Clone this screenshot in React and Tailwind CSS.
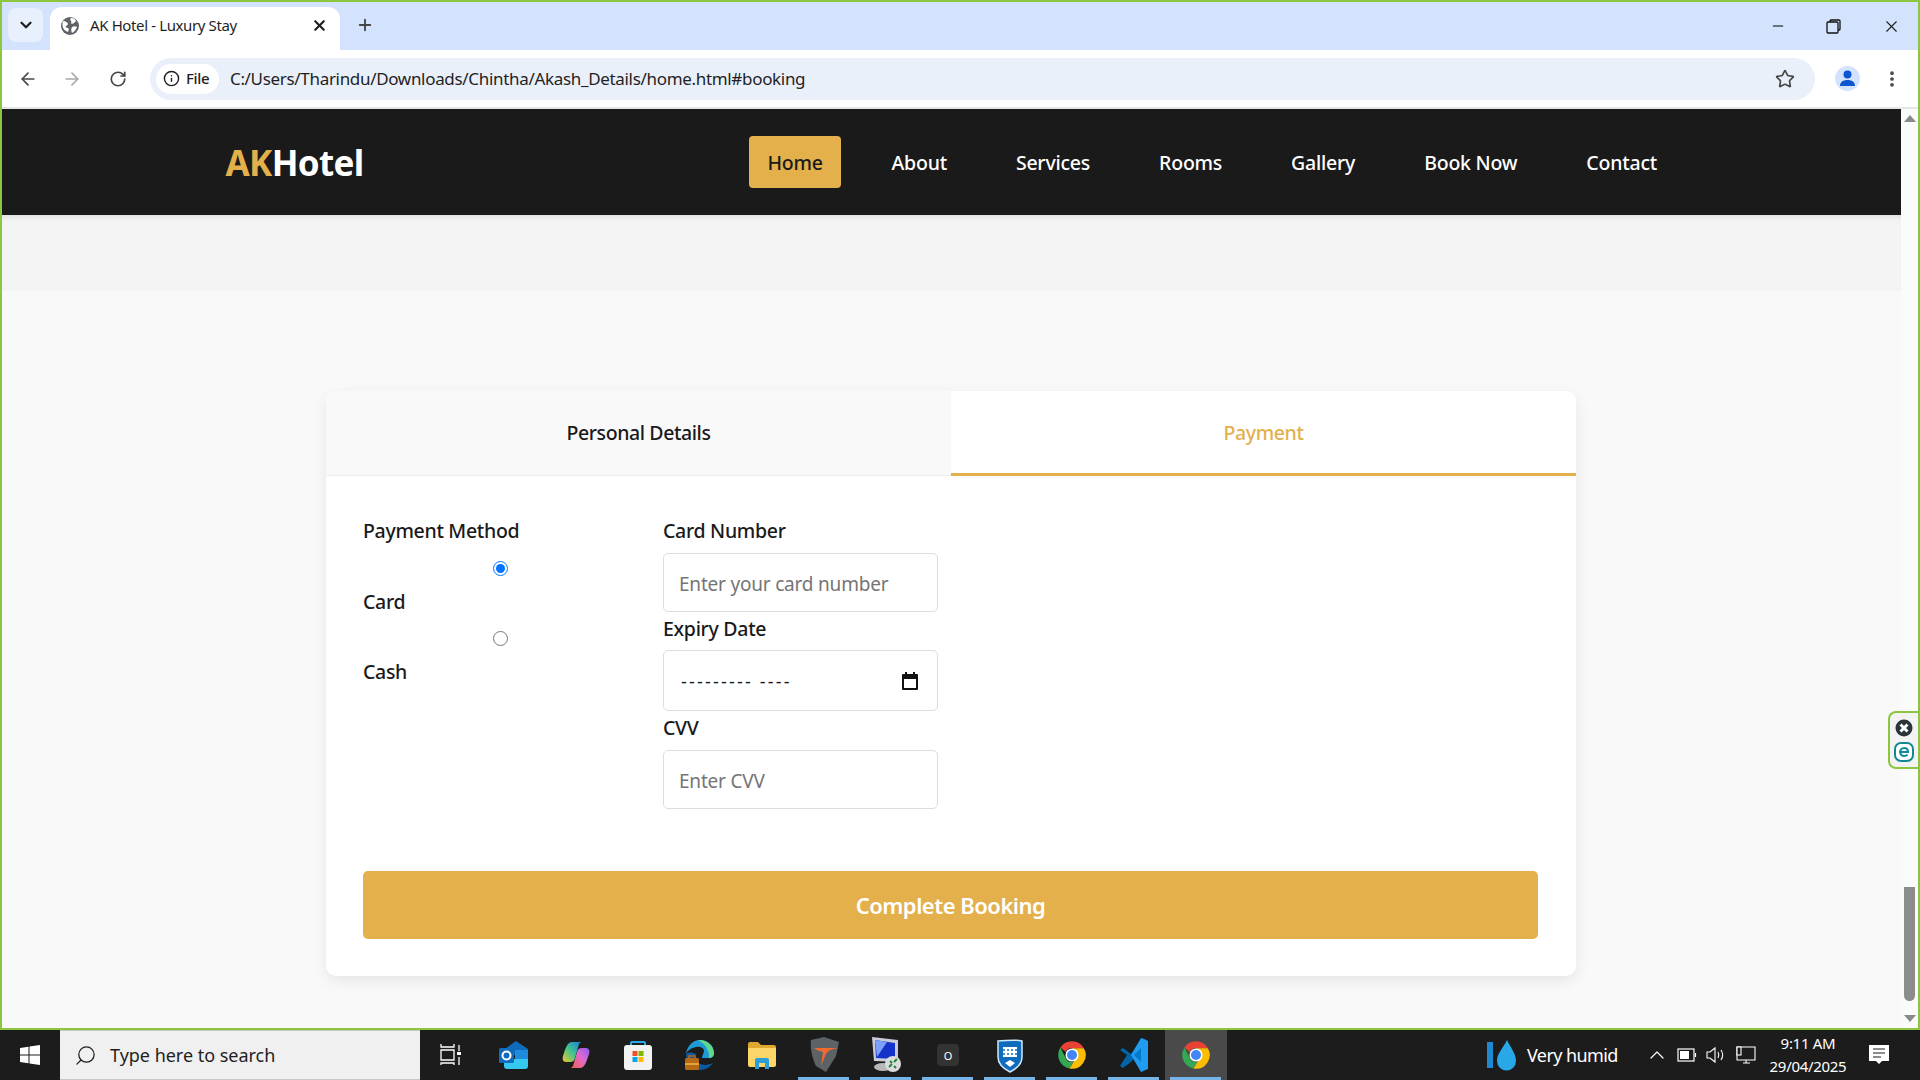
import { ArrowLeft, ArrowRight, RotateCw, Info, Star, X, Plus, ChevronDown, Minus, EllipsisVertical, Search, ChevronUp } from 'lucide-react'

const font = "font-['Noto_Sans','Liberation_Sans',sans-serif]"

function ChromeLogo() {
  return (
    <svg width="30" height="30" viewBox="0 0 48 48">
      <path fill="#ea4335" d="M24 2a22 22 0 0 1 19 11H24a11 11 0 0 0-10 6L5.500 12A22 22 0 0 1 24 2z" />
      <path fill="#34a853" d="M5.500 12 14 29a11 11 0 0 0 12 6l-6 10.600A22 22 0 0 1 5.500 12z" />
      <path fill="#fbbc04" d="M43 13a22 22 0 0 1-23 32.600L30 29a11 11 0 0 0 0-11l-6-5z" />
      <circle cx="24" cy="24" r="10.500" fill="#fff" />
      <circle cx="24" cy="24" r="8" fill="#4285f4" />
    </svg>
  )
}

function Outlook() {
  return (
    <svg width="30" height="28" viewBox="0 0 30 28">
      <path fill="#0f6cbd" d="M6 8l11-8 12 8v6H6z" />
      <path fill="#1f8bdc" d="M16 9h13v9H16z" />
      <path fill="#35c8f0" d="M5 18h24v7a3 3 0 0 1-3 3H8a3 3 0 0 1-3-3z" />
      <rect x="0" y="7" width="15" height="15" rx="1.500" fill="#0f6cbd" />
      <circle cx="7.500" cy="14.500" r="4" fill="none" stroke="#fff" strokeWidth="2" />
    </svg>
  )
}

function Copilot() {
  return (
    <svg width="28" height="28" viewBox="0 0 28 28">
      <defs>
        <linearGradient id="copA" x1="0" y1="1" x2="1" y2="0">
          <stop offset="0" stopColor="#f5c72e" />
          <stop offset="0.5" stopColor="#3ec48e" />
          <stop offset="1" stopColor="#1e7ae0" />
        </linearGradient>
        <linearGradient id="copB" x1="0" y1="1" x2="1" y2="0">
          <stop offset="0" stopColor="#f0604a" />
          <stop offset="0.55" stopColor="#e06ad0" />
          <stop offset="1" stopColor="#8a5cf0" />
        </linearGradient>
      </defs>
      <path fill="url(#copA)" d="M10 1h9l-2 2-4 14c-1 3-2 4-5 4H4c-3 0-4-3-3-6 2-6 4-14 9-14z" />
      <path fill="url(#copB)" d="M18 27H9l2-2 4-14c1-3 2-4 5-4h4c3 0 4 3 3 6-2 6-4 14-9 14z" />
    </svg>
  )
}

function Store() {
  return (
    <svg width="30" height="30" viewBox="0 0 30 30">
      <path fill="none" stroke="#28a8ea" strokeWidth="2" d="M8 7V3a1 1 0 0 1 1-1h12a1 1 0 0 1 1 1v4" />
      <rect x="1" y="5" width="28" height="25" rx="3" fill="#f2f2f2" />
      <rect x="9.500" y="11" width="5" height="5" fill="#f25022" />
      <rect x="15.500" y="11" width="5" height="5" fill="#7fba00" />
      <rect x="9.500" y="17" width="5" height="5" fill="#00a4ef" />
      <rect x="15.500" y="17" width="5" height="5" fill="#ffb900" />
    </svg>
  )
}

function Edge() {
  return (
    <svg width="32" height="32" viewBox="0 0 32 32">
      <path fill="#1e9bd7" d="M2 15C3 7 9 1 16 1c8 0 14 6 14 13 0 3-2 5-6 5h-6c0-3 2-5 2-7 0-3-4-5-8-4-5 1-8 3-10 7z" />
      <path fill="#5fd88c" d="M14 1c8-1 16 5 16 13 0 3-2 5-5 5 1-6-3-14-11-18z" />
      <path fill="#0c59a4" d="M2 15c0 8 6 16 14 16 6 0 10-3 13-7-4 2-10 3-15 0-3-2-4-6-2-9C7 13 4 13 2 15z" />
      <rect x="1" y="19" width="14" height="12" rx="1.500" fill="#b86a12" />
      <rect x="1" y="24" width="14" height="2" fill="#e3a33b" />
      <rect x="5" y="17" width="6" height="3" fill="none" stroke="#b86a12" strokeWidth="1.500" />
    </svg>
  )
}

function Folder() {
  return (
    <svg width="30" height="28" viewBox="0 0 30 28">
      <path fill="#e0a82e" d="M1 3a2 2 0 0 1 2-2h8l3 3h13a2 2 0 0 1 2 2v4H1z" />
      <path fill="#fcd669" d="M1 7h28v17a2 2 0 0 1-2 2H3a2 2 0 0 1-2-2z" />
      <path fill="#2d9fd8" d="M8 28v-9a2 2 0 0 1 2-2h10a2 2 0 0 1 2 2v9h-4v-6h-6v6z" />
    </svg>
  )
}

function Arrowhead() {
  return (
    <svg width="32" height="38" viewBox="0 0 32 38">
      <path fill="#5c6266" d="M3 4l13-3 15 5-3 14-10 16-10-6C4 22 2 12 3 4z" />
      <path fill="#f26a2e" d="M6 12h24c-5 1-10 2-12 6l-5 12 2-14-6-2z" />
    </svg>
  )
}

function RemoteDesktop() {
  return (
    <svg width="32" height="38" viewBox="0 0 32 38">
      <path fill="#c8ccd6" d="M2 1l26 3v22L4 25z" />
      <path fill="#1433c8" d="M5 4l20 3v16L6 22z" />
      <path fill="#7fa0ff" d="M5 4l12 2-10 15z" />
      <ellipse cx="13" cy="31" rx="9" ry="4" fill="#b8b8b8" />
      <circle cx="23" cy="28" r="8" fill="#dcdcdc" />
      <path stroke="#22863a" strokeWidth="2" fill="none" d="M19 31l3-3m2-2 3-3M20 25l2 2m2 3 2 2" />
    </svg>
  )
}

function DarkO() {
  return (
    <div className="w-[22px] h-[22px] bg-[#333333] rounded-sm flex items-center justify-center text-white text-[11px] leading-none">
      O
    </div>
  )
}

function Shield() {
  return (
    <svg width="26" height="36" viewBox="0 0 26 36">
      <path fill="#0f6cbd" stroke="#cfe8fa" strokeWidth="1.500" d="M1 4c8 0 16-2 24 0v16c0 7-6 12-12 15C7 32 1 27 1 20z" />
      <path fill="#fff" d="M6 10h14v10H6zM13 23l5 3-5 4-5-4z" />
      <path stroke="#0f6cbd" strokeWidth="1.500" strokeDasharray="2 2" d="M6 13h14M6 17h14" />
    </svg>
  )
}

function VSCode() {
  return (
    <svg width="30" height="36" viewBox="0 0 30 36">
      <path fill="#0065a9" d="M1 13l3-2 8 6 12-16 5 3v2L12 25l-8 6-3-2 7-11z" />
      <path fill="#1f9cf0" d="M22 1l7 3v28l-7 3-10-17z" />
      <path fill="#007acc" d="M22 11l-7 7 7 7z" />
    </svg>
  )
}

function TaskIcon({ children, underline, active }) {
  return (
    <div className={`relative w-[62px] h-full flex items-center justify-center ${active ? 'bg-[#4a4a4a]' : ''}`}>
      {children}
      {underline && <div className="absolute bottom-0 left-[5px] right-[6px] h-[3px] bg-[#76b3e6]" />}
    </div>
  )
}

function BrowserChrome() {
  return (
    <>
      <div className="h-[48px] shrink-0 bg-[#d3e3fd] flex items-end pl-[6px]">
        <div className="w-[35px] h-[34px] mb-[8px] rounded-lg bg-[#e8f0fe] flex items-center justify-center">
          <ChevronDown size={18} strokeWidth={3} className="text-[#1f1f1f]" />
        </div>
        <div className="ml-[7px] w-[290px] h-[43px] bg-white rounded-t-xl flex items-center pl-[10px] pr-[12px] pb-[6px]">
          <svg width="18" height="18" viewBox="0 0 18 18" className="ml-[1px]">
            <circle cx="9" cy="9" r="9" fill="#5f6368" />
            <path fill="#fff" d="M2 4c3 0 5 2 5 3s-1 1-2 2 1 2 2 2 1 2 0 4C4 14 2 12 1.500 9c0-2 0-4 .5-5zM10 1c3 0 4 1 5 3l-2 2c-1 1-3 1-3 0s1-1 0-2-1-2 0-3zM11 10c2-1 4-1 5 0-1 3-3 5-5 6-1-2-1-4 0-6z" />
          </svg>
          <span className="ml-[11px] text-[15px] text-[#1f1f1f] flex-1 tracking-[-0.38px]">AK Hotel - Luxury Stay</span>
          <X size={17} strokeWidth={3} className="text-[#1f1f1f]" />
        </div>
        <Plus size={18} strokeWidth={2.500} className="ml-[16px] mb-[16px] text-[#444746]" />
        <div className="flex-1" />
        <div className="flex items-center mb-[16px] h-[16px] pr-[17px] text-[#1f1f1f]">
          <Minus size={16} strokeWidth={1.750} className="text-black" />
          <svg width="15" height="15" viewBox="0 0 15 15" fill="none" stroke="#111" strokeWidth="1.300" className="ml-[40px]">
            <rect x="1" y="3" width="11" height="11" rx="1" />
            <path d="M4 3V2a1 1 0 0 1 1-1h8a1 1 0 0 1 1 1v8a1 1 0 0 1-1 1h-1" />
          </svg>
          <X size={19} strokeWidth={1.400} className="ml-[41px]" />
        </div>
      </div>
      <div className="h-[57px] shrink-0 bg-white rounded-t-lg flex items-center pl-[16px] pr-[16px]">
        <ArrowLeft size={20} strokeWidth={2} className="text-[#474747]" />
        <ArrowRight size={20} strokeWidth={2} className="ml-[24px] text-[#a9a9a9]" />
        <RotateCw size={18} strokeWidth={2.250} className="ml-[27px] text-[#474747]" />
        <div className="ml-[23px] h-[42px] w-[1666px] rounded-full bg-[#eaf0fa] flex items-center pl-[6px] pr-[20px]">
          <div className="h-[30px] w-[63px] bg-white rounded-full flex items-center pl-[7px] gap-[6px]">
            <Info size={17} strokeWidth={2} className="text-[#1f1f1f]" />
            <span className="text-[15px] font-medium text-[#1f1f1f] tracking-[-0.3px]">File</span>
          </div>
          <span className="ml-[11px] text-[17px] text-[#1f1f1f] flex-1 tracking-[-0.32px]">C:/Users/Tharindu/Downloads/Chintha/Akash_Details/home.html#booking</span>
          <Star size={20} strokeWidth={2} className="text-[#474747]" />
        </div>
        <div className="ml-[20px] w-[25px] h-[25px] rounded-full bg-[#d3e3fd] flex items-center justify-center overflow-hidden">
          <svg width="17" height="17" viewBox="0 0 17 17" fill="#0b57d0">
            <circle cx="8.500" cy="4.500" r="4" />
            <path d="M1 16c0-4 3-6 7.500-6s7.500 2 7.500 6z" />
          </svg>
        </div>
        <EllipsisVertical size={20} strokeWidth={2.500} className="ml-[22px] text-[#474747]" />
      </div>
      <div className="h-[2px] shrink-0 bg-[#e6e6e6]" />
    </>
  )
}

function Navbar() {
  const links = ['About', 'Services', 'Rooms', 'Gallery', 'Book Now', 'Contact']
  return (
    <nav className="h-[106px] shrink-0 bg-[#1a1a1a] flex justify-center">
      <div className="w-[1450px] pr-[1px] flex items-center justify-between">
        <div className="ml-[-1px] pt-[2px] text-[35px] font-bold tracking-[-0.65px] text-white"><span className="text-[#e3b04b]">AK</span>Hotel</div>
        <ul className="flex items-center gap-[32px]">
          <li className="h-[52px] w-[92px] flex items-center justify-center bg-[#e3b04b] rounded text-[#1a1a1a] text-[19.500px] pt-[2px] font-medium tracking-[-0.22px]">Home</li>
          {links.map((l) => (
            <li key={l} className="px-[18.500px] pt-[2px] text-white text-[19.500px] font-medium tracking-[-0.22px]">{l}</li>
          ))}
        </ul>
      </div>
    </nav>
  )
}

function Field({ label, children }) {
  return (
    <div>
      <label className="block h-[30px] leading-[30px] text-[19.500px] font-medium text-[#1a1a1a] tracking-[-0.3px]">{label}</label>
      {children}
    </div>
  )
}

function BookingCard() {
  return (
    <div className="w-[1250px] ml-[324px] mt-[100px] bg-white rounded-[10px] shadow-[0_5px_15px_rgba(0,0,0,0.08)] shrink-0">
      <div className="flex h-[85px]">
        <div className="flex-1 bg-[#f9f9f9] rounded-tl-[10px] border-b border-[#eeeeee] flex items-center justify-center text-[19.500px] font-medium text-[#1a1a1a] tracking-[-0.4px]">Personal Details</div>
        <div className="flex-1 bg-white rounded-tr-[10px] border-b-[3px] border-[#e3b04b] flex items-center justify-center pt-[2px] text-[19.500px] font-medium text-[#e3b04b] tracking-[-0.4px]">Payment</div>
      </div>
      <div className="pl-[37px] pr-[38px] pt-[40px] pb-[37px]">
        <div className="grid grid-cols-[275px_275px] gap-x-[25px]">
          <div>
            <label className="block h-[30px] leading-[30px] text-[19.500px] font-medium text-[#1a1a1a] tracking-[-0.3px]">Payment Method</label>
            <div className="h-[70px] pt-[15px]">
              <input type="radio" name="pay" defaultChecked className="block mx-auto w-[15px] h-[15px] accent-[#0075ff]" />
              <div className="mt-[11px] text-[19.500px] leading-[30px] font-medium text-[#1a1a1a] tracking-[-0.3px]">Card</div>
            </div>
            <div className="h-[70px] pt-[15px]">
              <input type="radio" name="pay" className="block mx-auto w-[15px] h-[15px]" />
              <div className="mt-[11px] text-[19.500px] leading-[30px] font-medium text-[#1a1a1a] tracking-[-0.3px]">Cash</div>
            </div>
          </div>
          <div>
            <Field label="Card Number">
              <input placeholder="Enter your card number" className="block mt-[7px] w-full h-[59px] px-[15px] pt-[2px] text-[19px] border border-[#dddddd] rounded-[5px] placeholder:text-[#757575] tracking-[-0.2px]" />
            </Field>
            <div className="mt-[2px]">
              <Field label="Expiry Date">
                <div className="mt-[6px] w-full h-[61px] pl-[17px] pr-[18px] pt-[1px] border border-[#dddddd] rounded-[5px] flex items-center justify-between">
                  <span className="text-[18px] text-[#1a1a1a] tracking-[2.2px] whitespace-pre">--------- ----</span>
                  <svg width="18" height="18" viewBox="0 0 18 18" fill="#111">
                    <path d="M4 0h2v2h6V0h2v2h2a1 1 0 0 1 1 1v14a1 1 0 0 1-1 1H2a1 1 0 0 1-1-1V3a1 1 0 0 1 1-1h2zM3 7v9h12V7z" />
                  </svg>
                </div>
              </Field>
            </div>
            <div className="mt-[2px]">
              <Field label="CVV">
                <input placeholder="Enter CVV" className="block mt-[7px] w-full h-[59px] px-[15px] pt-[2px] text-[19px] border border-[#dddddd] rounded-[5px] placeholder:text-[#757575] tracking-[-0.2px]" />
              </Field>
            </div>
          </div>
        </div>
        <button className="mt-[62px] w-full h-[68px] bg-[#e3b04b] rounded-[5px] text-white text-[22px] font-semibold tracking-[-0.5px]">Complete Booking</button>
      </div>
    </div>
  )
}

function Taskbar() {
  return (
    <div className={`relative h-[50px] shrink-0 bg-[#1c1c1c] flex items-center text-white ${font}`}>
      <div className="w-[60px] flex justify-center">
        <svg width="20" height="20" viewBox="0 0 20 20" fill="#fff">
          <path d="M0 3l8.500-1.200v7.700H0zM9.500 1.600 20 0v9.500H9.500zM0 10.500h8.500v7.700L0 17zM9.500 10.500H20V20L9.500 18.400z" />
        </svg>
      </div>
      <div className="w-[360px] h-full bg-[#f0f0f0] border-t border-b border-[#c8c8c8] flex items-center pl-[14px] text-[#1f1f1f]">
        <Search size={23} strokeWidth={1.300} className="-scale-x-100" />
        <span className="ml-[13px] text-[18px] tracking-[-0.02px]">Type here to search</span>
      </div>
      <div className="w-[58px] flex justify-center ml-[2px]">
        <svg width="22" height="22" viewBox="0 0 22 22" fill="none" stroke="#fff" strokeWidth="1.300">
          <path d="M1 0v3h13V0M1 6h13v10H1zM1 21v-2h13v2M19 1v6M19 13v8" />
          <rect x="17" y="8" width="4" height="3" fill="#fff" stroke="none" />
        </svg>
      </div>
      <div className="flex h-full items-center ml-[3px]">
        <TaskIcon><Outlook /></TaskIcon>
        <TaskIcon><Copilot /></TaskIcon>
        <TaskIcon><Store /></TaskIcon>
        <TaskIcon><Edge /></TaskIcon>
        <TaskIcon><Folder /></TaskIcon>
        <TaskIcon underline><Arrowhead /></TaskIcon>
        <TaskIcon underline><RemoteDesktop /></TaskIcon>
        <TaskIcon underline><DarkO /></TaskIcon>
        <TaskIcon underline><Shield /></TaskIcon>
        <TaskIcon underline><ChromeLogo /></TaskIcon>
        <TaskIcon underline><VSCode /></TaskIcon>
        <TaskIcon underline active><ChromeLogo /></TaskIcon>
      </div>
      <div className="flex-1" />
      <div className="flex items-center">
        <svg width="30" height="32" viewBox="0 0 30 32">
          <rect x="0" y="3" width="6" height="26" fill="#1e88d0" />
          <path fill="#29a8e8" d="M20 1c3 7 9 13 9 21a9.500 9.500 0 0 1-19 0c0-8 7-14 10-21z" />
        </svg>
        <span className="ml-[10px] w-[100px] text-[18px] tracking-[-0.6px]">Very humid</span>
        <ChevronUp size={24} strokeWidth={1.200} className="ml-[18px]" />
        <svg width="20" height="14" viewBox="0 0 20 14" className="ml-[8px]" fill="none" stroke="#fff" strokeWidth="1.200">
          <rect x="1" y="1" width="16" height="12" />
          <rect x="3" y="3" width="9" height="8" fill="#fff" stroke="none" />
          <path d="M18.500 5v4" />
        </svg>
        <svg width="20" height="20" viewBox="0 0 20 20" className="ml-[9px]" fill="none" stroke="#fff" strokeWidth="1.100">
          <path d="M1 7h3l5-4v14l-5-4H1zM12 7c1 2 1 4 0 6M15 5c2 3 2 7 0 10" />
        </svg>
        <svg width="20" height="20" viewBox="0 0 20 20" className="ml-[10px]" fill="none" stroke="#fff" strokeWidth="1.100">
          <path d="M1 2h18v13H1zM7 18h7M10 15v3" />
          <rect x="1" y="2" width="4" height="8" fill="#1c1c1c" />
        </svg>
        <div className="ml-[2px] w-[100px] text-center text-[15px] leading-[23px] tracking-[-0.3px]">
          <div>9:11 AM</div>
          <div>29/04/2025</div>
        </div>
        <div className="ml-[11px] mr-[31px]">
          <svg width="20" height="20" viewBox="0 0 20 20">
            <path fill="#fff" d="M0 0h20v16h-7l-3 3-3-3H0z" />
            <path stroke="#1c1c1c" strokeWidth="1.200" d="M4 4h12M4 8h12M4 12h8" />
          </svg>
        </div>
      </div>
    </div>
  )
}

export default function App() {
  return (
    <div className={`h-screen overflow-hidden flex flex-col ${font}`}>
      <div className="h-[1030px] shrink-0 border-2 border-[#8cc63f] flex flex-col relative overflow-hidden">
        <BrowserChrome />
        <div className="flex-1 flex min-h-0">
          <div className="flex-1 min-w-0 overflow-hidden bg-[#f9f9f9] flex flex-col">
            <Navbar />
            <div className="h-[76px] shrink-0 bg-[#f4f4f4] shadow-[inset_0_5px_6px_-4px_rgba(0,0,0,0.12)]" />
            <BookingCard />
          </div>
          <div className="w-[17px] shrink-0 bg-[#fbfbfb] flex flex-col items-center justify-between py-[6px]">
            <div className="w-0 h-0 border-l-[6px] border-r-[6px] border-b-[7px] border-l-transparent border-r-transparent border-b-[#8a8a8a]" />
            <div className="flex-1" />
            <div className="w-[11px] h-[114px] mb-[14px] bg-[#8c8c8c] rounded-b-full" />
            <div className="w-0 h-0 border-l-[6px] border-r-[6px] border-t-[7px] border-l-transparent border-r-transparent border-t-[#8a8a8a]" />
          </div>
        </div>
        <div className="absolute right-0 top-[709px] w-[30px] h-[58px] bg-[#f3f3f3] border-2 border-r-0 border-[#8cc63f] rounded-l-lg flex flex-col items-center justify-center gap-[5px]">
          <svg width="18" height="18" viewBox="0 0 18 18">
            <circle cx="9" cy="9" r="8.500" fill="#2d333b" />
            <path stroke="#fff" strokeWidth="3" d="M5.500 5.500l7 7M12.500 5.500l-7 7" />
          </svg>
          <svg width="20" height="20" viewBox="0 0 20 20">
            <rect x="1" y="1" width="18" height="18" rx="6" fill="#fff" stroke="#0f8a94" strokeWidth="2" />
            <path fill="none" stroke="#0f8a94" strokeWidth="2" d="M6 10h8c0-3-2-4-4-4s-4 2-4 4 2 4 4 4c1.500 0 3-.5 3.500-1.500" />
          </svg>
        </div>
      </div>
      <Taskbar />
    </div>
  )
}
